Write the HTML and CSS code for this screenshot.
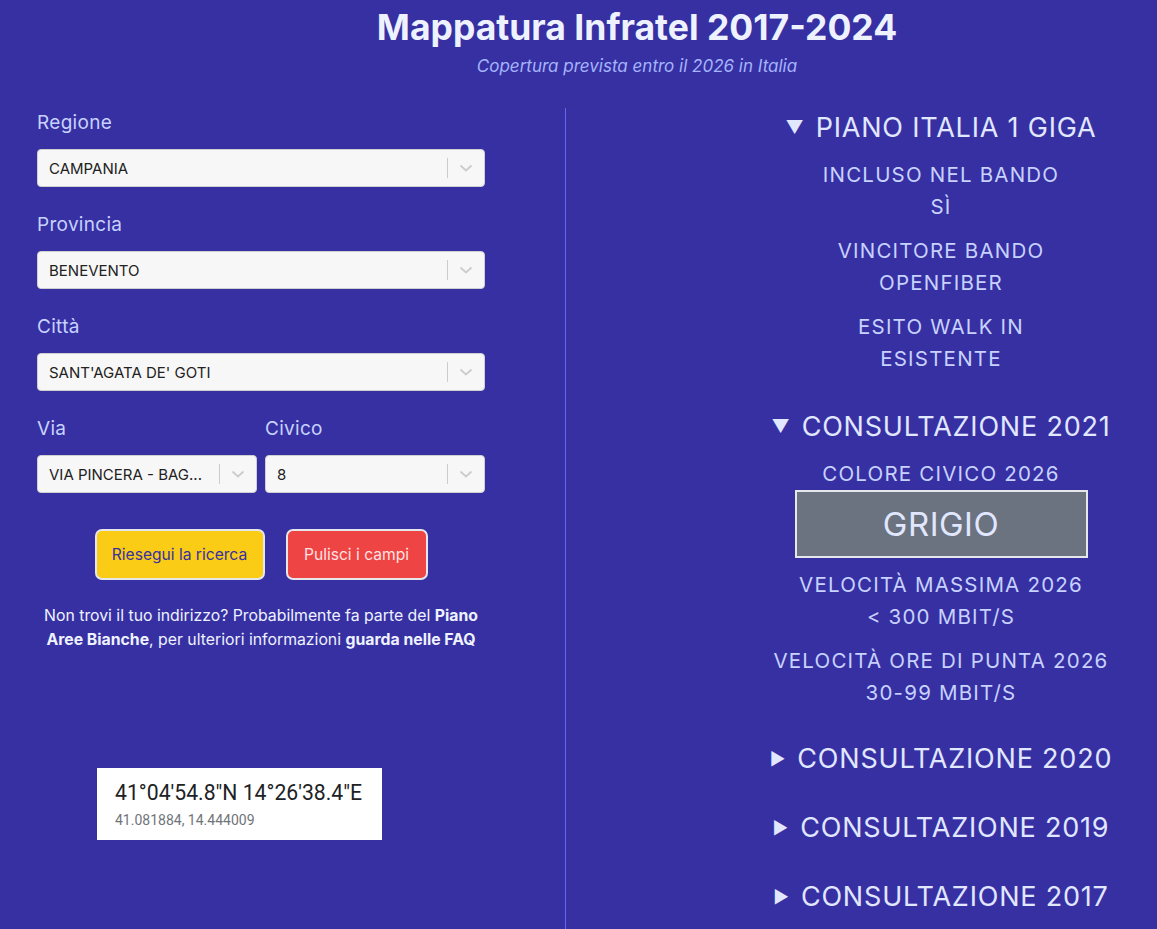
FILE: index.html
```html
<!DOCTYPE html>
<html lang="it">
<head>
<meta charset="utf-8">
<title>Mappatura Infratel 2017-2024</title>
<link rel="stylesheet" href="styles.css">
</head>
<body>
<header class="header">
  <h1 class="title">Mappatura Infratel 2017-2024</h1>
  <p class="subtitle">Copertura prevista entro il 2026 in Italia</p>
</header>
<main class="main">
  <section class="left">
    <div class="field">
      <label class="label">Regione</label>
      <div class="select"><span class="select-value">CAMPANIA</span><span class="sep"></span><svg class="chev" viewBox="0 0 20 20"><path d="M4.5 7.5 L10 12.5 L15.5 7.5" fill="none" stroke="#cccccc" stroke-width="1.8"/></svg></div>
    </div>
    <div class="field">
      <label class="label">Provincia</label>
      <div class="select"><span class="select-value">BENEVENTO</span><span class="sep"></span><svg class="chev" viewBox="0 0 20 20"><path d="M4.5 7.5 L10 12.5 L15.5 7.5" fill="none" stroke="#cccccc" stroke-width="1.8"/></svg></div>
    </div>
    <div class="field">
      <label class="label">Città</label>
      <div class="select"><span class="select-value">SANT'AGATA DE' GOTI</span><span class="sep"></span><svg class="chev" viewBox="0 0 20 20"><path d="M4.5 7.5 L10 12.5 L15.5 7.5" fill="none" stroke="#cccccc" stroke-width="1.8"/></svg></div>
    </div>
    <div class="row">
      <div class="field">
        <label class="label">Via</label>
        <div class="select"><span class="select-value">VIA PINCERA - BAG...</span><span class="sep"></span><svg class="chev" viewBox="0 0 20 20"><path d="M4.5 7.5 L10 12.5 L15.5 7.5" fill="none" stroke="#cccccc" stroke-width="1.8"/></svg></div>
      </div>
      <div class="field">
        <label class="label">Civico</label>
        <div class="select"><span class="select-value">8</span><span class="sep"></span><svg class="chev" viewBox="0 0 20 20"><path d="M4.5 7.5 L10 12.5 L15.5 7.5" fill="none" stroke="#cccccc" stroke-width="1.8"/></svg></div>
      </div>
    </div>
    <div class="buttons">
      <button class="btn btn-yellow">Riesegui la ricerca</button>
      <button class="btn btn-red">Pulisci i campi</button>
    </div>
    <p class="info">Non trovi il tuo indirizzo? Probabilmente fa parte del <b>Piano Aree Bianche</b>, per ulteriori informazioni <b>guarda nelle FAQ</b></p>
    <div class="coords">
      <div class="coords-dms">41°04'54.8"N 14°26'38.4"E</div>
      <div class="coords-dec">41.081884, 14.444009</div>
    </div>
  </section>
  <div class="divider"></div>
  <section class="right">
    <div class="group">
      <div class="summary"><span class="marker">▼</span>PIANO ITALIA 1 GIGA</div>
      <div class="item">INCLUSO NEL BANDO<br>SÌ</div>
      <div class="item">VINCITORE BANDO<br>OPENFIBER</div>
      <div class="item">ESITO WALK IN<br>ESISTENTE</div>
    </div>
    <div class="group second">
      <div class="summary"><span class="marker">▼</span>CONSULTAZIONE 2021</div>
      <div class="item">COLORE CIVICO 2026</div>
      <div class="color-box">GRIGIO</div>
      <div class="item">VELOCITÀ MASSIMA 2026<br>&lt; 300 MBIT/S</div>
      <div class="item">VELOCITÀ ORE DI PUNTA 2026<br>30-99 MBIT/S</div>
    </div>
    <div class="group closed">
      <div class="summary"><span class="marker small">►</span>CONSULTAZIONE 2020</div>
    </div>
    <div class="group closed">
      <div class="summary"><span class="marker small">►</span>CONSULTAZIONE 2019</div>
    </div>
    <div class="group closed">
      <div class="summary"><span class="marker small">►</span>CONSULTAZIONE 2017</div>
    </div>
  </section>
</main>
</body>
</html>
```

FILE: styles.css
```css
* { box-sizing: border-box; }
html, body { margin: 0; padding: 0; }
body {
  background: #3730a3;
  font-family: "Inter", "Noto Sans", sans-serif;
  color: #e0e7ff;
  width: 1157px;
  height: 929px;
  overflow: hidden;
}
.header {
  padding-left: 117px;
  text-align: center;
}
.title {
  margin: 0;
  padding-top: 8px;
  font-size: 35.5px;
  line-height: 40px;
  font-weight: 700;
  color: #eef2ff;
}
.subtitle {
  margin: 8px 0 0;
  font-size: 17px;
  line-height: 20px;
  font-style: italic;
  color: #a5b4fc;
}
.main {
  display: flex;
  margin-top: 32px;
}
.left {
  width: 565px;
  padding-left: 37px;
  padding-right: 80px;
  padding-top: 2px;
}
.field { margin-bottom: 25px; }
.label {
  display: block;
  font-size: 19px;
  line-height: 26px;
  letter-spacing: 0.3px;
  color: #c7d2fe;
  margin-bottom: 13px;
}
.select {
  display: flex;
  align-items: center;
  height: 38px;
  background: #f7f7f7;
  border: 1px solid #cfcfcf;
  border-radius: 4px;
  padding-left: 11px;
}
.select-value {
  flex: 1;
  font-size: 15px;
  color: #222;
  white-space: nowrap;
  overflow: hidden;
}
.sep {
  width: 1px;
  height: 20px;
  background: #cccccc;
}
.chev {
  width: 20px;
  height: 20px;
  margin: 0 8px;
}
.row {
  display: grid;
  grid-template-columns: 1fr 1fr;
  gap: 8px;
}
.buttons {
  display: flex;
  justify-content: center;
  gap: 21px;
  margin-top: 11px;
}
.btn {
  height: 51px;
  border: 2px solid #e5e7eb;
  border-radius: 7px;
  font-family: inherit;
  font-size: 15.6px;
}
.btn-yellow { width: 170px; background: #facc15; color: #3730a3; }
.btn-red { width: 142px; background: #ef4444; color: #fee2e2; }
.info {
  margin: 24px 0 0;
  text-align: center;
  font-size: 15.8px;
  line-height: 24px;
  color: #eef2ff;
}
.info b { font-weight: 700; }
.coords {
  width: 285px;
  height: 72px;
  margin: 116px 0 0 60px;
  background: #ffffff;
  padding: 13px 0 0 18px;
}
.coords-dms {
  font-family: "Roboto", sans-serif;
  font-size: 21.2px;
  line-height: 24px;
  color: #202124;
}
.coords-dec {
  font-family: "Roboto", sans-serif;
  font-size: 14px;
  line-height: 18px;
  margin-top: 6px;
  color: #70757a;
}
.divider {
  width: 1px;
  background: #6366f1;
  height: 830px;
}
.right {
  flex: 1;
  padding-left: 159px;
  padding-top: 4px;
  text-align: center;
}
.group { margin-bottom: 36px; }
.group.second { margin-bottom: 34px; }
.group.closed { margin-bottom: 37px; }
.summary {
  font-size: 27px;
  line-height: 32px;
  letter-spacing: 0.8px;
  color: #e0e7ff;
  margin-bottom: 15px;
}
.marker {
  font-size: 18px;
  margin-right: 12px;
  vertical-align: 3px;
  letter-spacing: 0;
}
.marker.small { font-size: 17px; }
.item {
  font-size: 20.5px;
  line-height: 32px;
  letter-spacing: 1.2px;
  color: #c7d2fe;
  margin-bottom: 12px;
}
.color-box {
  width: 293px;
  height: 68px;
  margin: -12px auto 11px;
  background: #6b7280;
  border: 2px solid #e5e7eb;
  font-size: 33px;
  line-height: 64px;
  letter-spacing: 0.5px;
  color: #e0e7ff;
}
```
